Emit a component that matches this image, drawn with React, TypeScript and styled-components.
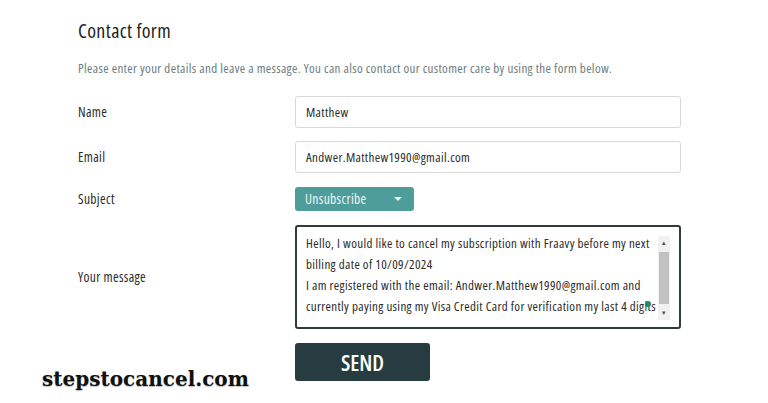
import React from 'react';
import styled, { createGlobalStyle } from 'styled-components';

const GlobalStyle = createGlobalStyle`
  html, body {
    margin: 0;
    padding: 0;
    background: #ffffff;
  }
  body {
    font-family: 'Open Sans', Roboto, sans-serif;
    font-stretch: 75%;
    letter-spacing: 0.35px;
  }
`;

const colors = {
  text: '#2b2b2b',
  muted: '#6d7c80',
  border: '#d9d9d9',
  teal: '#4f9d9b',
  dark: '#263c41',
};

const MESSAGE_LINES = [
  'Hello, I would like to cancel my subscription with Fraavy before my next',
  'billing date of 10/09/2024',
  'I am registered with the email: Andwer.Matthew1990@gmail.com and',
  'currently paying using my Visa Credit Card for verification my last 4 digits',
];

export default function App() {
  return (
    <>
      <GlobalStyle />
      <Page>
        <Title>Contact form</Title>
        <Intro>Please enter your details and leave a message. You can also contact our customer care by using the form below.</Intro>
        <Form>
          <Row>
            <Label>Name</Label>
            <TextInput>Matthew</TextInput>
          </Row>
          <Row>
            <Label>Email</Label>
            <TextInput>Andwer.Matthew1990@gmail.com</TextInput>
          </Row>
          <Row>
            <Label>Subject</Label>
            <Select>
              <span>Unsubscribe</span>
              <Caret />
            </Select>
          </Row>
          <Row>
            <Label>Your message</Label>
            <MessageBox>
              {MESSAGE_LINES.map((line) => (
                <MessageLine key={line}>{line}</MessageLine>
              ))}
              <CursorDot />
              <Scrollbar>
                <ScrollArrow>▲</ScrollArrow>
                <ScrollThumb />
                <ScrollArrow>▼</ScrollArrow>
              </Scrollbar>
            </MessageBox>
          </Row>
          <Footer>
            <Logo>stepstocancel.com</Logo>
            <SendButton type="button">SEND</SendButton>
          </Footer>
        </Form>
      </Page>
    </>
  );
}

const Page = styled.div`
  width: 768px;
  height: 403px;
  padding: 20px 0 0 78px;
  box-sizing: border-box;
  overflow: hidden;
`;

const Title = styled.h1`
  margin: 0;
  font-size: 20px;
  font-weight: 400;
  line-height: 22px;
  color: #1f1f1f;
`;

const Intro = styled.p`
  margin: 18px 0 0;
  font-size: 13px;
  line-height: 16px;
  color: ${colors.muted};
`;

const Form = styled.div`
  display: flex;
  flex-direction: column;
  gap: 13px;
  margin-top: 20px;
`;

const Row = styled.div`
  display: grid;
  grid-template-columns: 217px 386px;
  align-items: center;
`;

const Label = styled.div`
  font-size: 13.5px;
  color: ${colors.text};
`;

const TextInput = styled.div`
  height: 32px;
  box-sizing: border-box;
  border: 1px solid ${colors.border};
  border-radius: 3px;
  padding: 0 10px;
  display: flex;
  align-items: center;
  font-size: 13px;
  color: ${colors.text};
`;

const Select = styled.div`
  width: 119px;
  height: 24px;
  margin: 1px 0;
  box-sizing: border-box;
  background: ${colors.teal};
  border-radius: 3px;
  padding: 0 12px 0 10px;
  display: flex;
  align-items: center;
  justify-content: space-between;
  font-size: 13.5px;
  font-weight: 500;
  color: #eef6f5;
`;

const Caret = styled.span`
  width: 0;
  height: 0;
  border-left: 4px solid transparent;
  border-right: 4px solid transparent;
  border-top: 4px solid #eef6f5;
`;

const MessageBox = styled.div`
  position: relative;
  height: 104px;
  box-sizing: border-box;
  border: 2px solid #333a3c;
  border-radius: 3px;
  padding: 6px 26px 6px 9px;
  overflow: hidden;
`;

const MessageLine = styled.div`
  font-size: 13px;
  line-height: 21px;
  color: ${colors.text};
  white-space: nowrap;
`;

const CursorDot = styled.span`
  position: absolute;
  left: 348px;
  top: 74px;
  width: 6px;
  height: 6px;
  border-radius: 50%;
  background: #1f8a6e;
`;

const Scrollbar = styled.div`
  position: absolute;
  top: 9px;
  right: 9px;
  width: 12px;
  height: 84px;
  background: #f1f1f1;
  display: flex;
  flex-direction: column;
  align-items: center;
`;

const ScrollArrow = styled.div`
  height: 14px;
  font-size: 6px;
  line-height: 14px;
  color: #505050;
`;

const ScrollThumb = styled.div`
  flex: 1;
  width: 10px;
  margin: 2px 0;
  background: #c1c1c1;
`;

const Footer = styled.div`
  display: grid;
  grid-template-columns: 253px 135px;
  margin-top: 1px;
  margin-left: -36px;
  align-items: start;
`;

const Logo = styled.div`
  font-family: 'DejaVu Serif', 'Liberation Serif', serif;
  font-stretch: normal;
  letter-spacing: 0;
  font-weight: 700;
  font-size: 20px;
  line-height: 22px;
  color: #111;
  padding-top: 25px;
  text-shadow: 0 1px 1px rgba(0, 0, 0, 0.25);
`;

const SendButton = styled.button`
  height: 38px;
  border: none;
  border-radius: 3px;
  background: ${colors.dark};
  color: #ffffff;
  font-family: 'Open Sans', Roboto, sans-serif;
  font-stretch: 75%;
  letter-spacing: 0;
  font-size: 22px;
  font-weight: 600;
`;
